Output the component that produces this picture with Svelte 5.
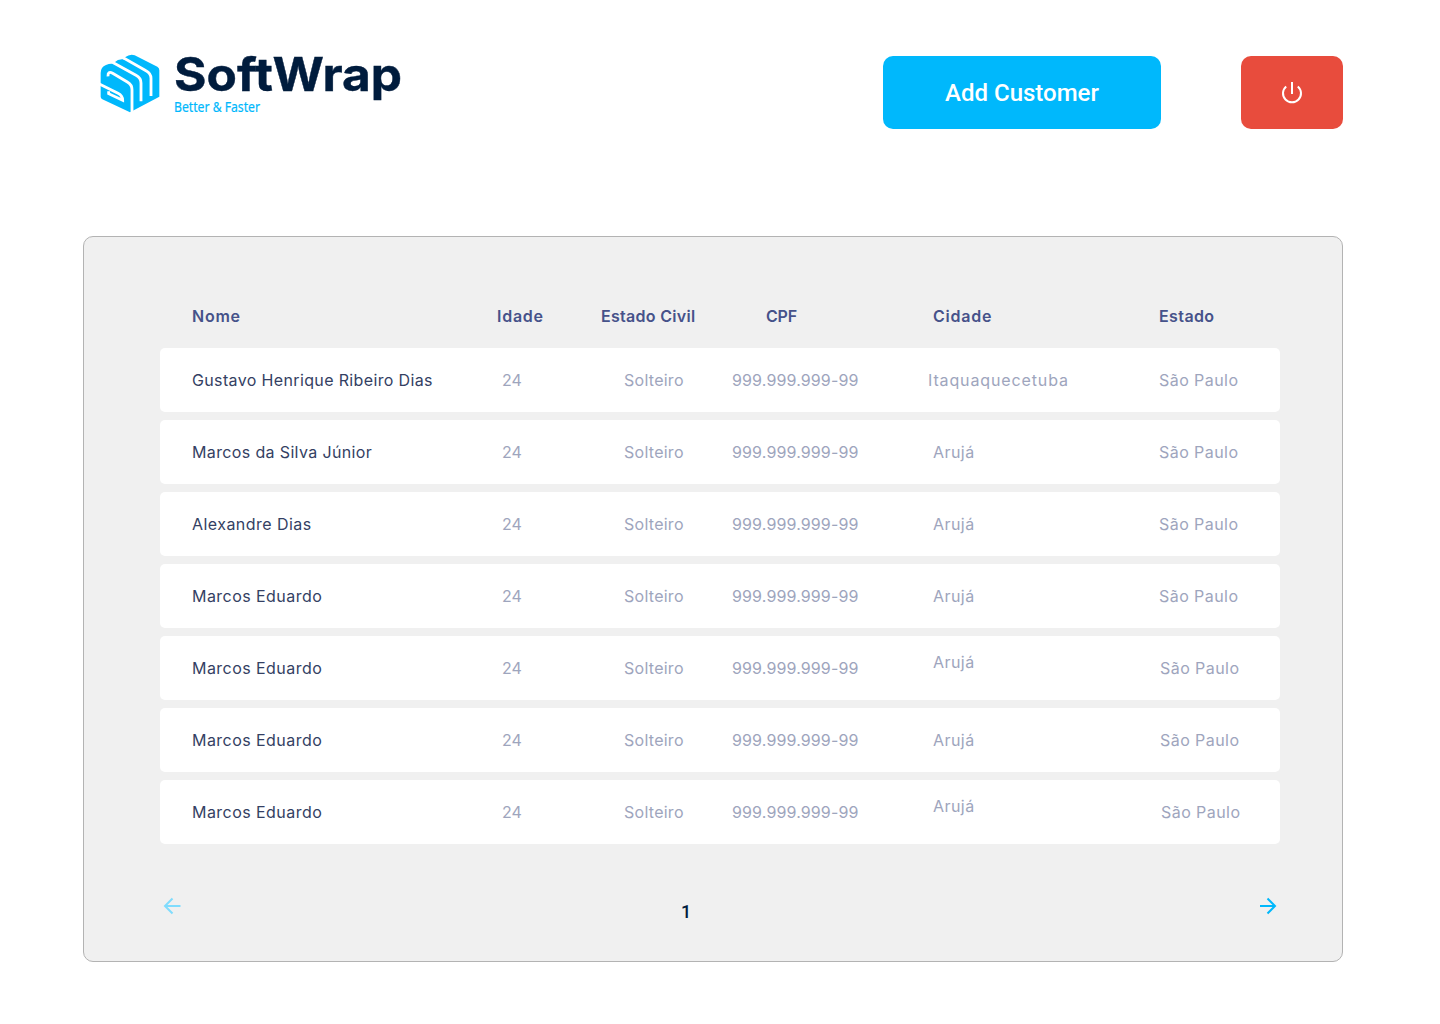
<script>
  const headings = [
    { text: 'Nome', col: 'name' },
    { text: 'Idade', col: 'age' },
    { text: 'Estado Civil', col: 'civil' },
    { text: 'CPF', col: 'cpf' },
    { text: 'Cidade', col: 'city' },
    { text: 'Estado', col: 'state' }
  ];

  const customers = [
    { name: 'Gustavo Henrique Ribeiro Dias', city: 'Itaquaquecetuba', long: true },
    { name: 'Marcos da Silva Júnior', city: 'Arujá', long: true },
    { name: 'Alexandre Dias', city: 'Arujá' },
    { name: 'Marcos Eduardo', city: 'Arujá' },
    { name: 'Marcos Eduardo', city: 'Arujá', raised: true, shift: 1 },
    { name: 'Marcos Eduardo', city: 'Arujá', shift: 1 },
    { name: 'Marcos Eduardo', city: 'Arujá', raised: true, shift: 2 }
  ];
</script>

<main>
  <header>
    <svg class="logo" width="320" height="75" viewBox="0 0 320 75" role="img" aria-label="SoftWrap">
      <g transform="scale(.33333)">
        <path fill="#00b8fc" d="M32 84Q32 66 48 60Q62 54 74 58V52Q84 42 98 43L105 44V37Q120 26 134 31L202 65Q208 69 208 76V155L120 202L37 163Q32 160 32 155Z" />
        <g fill="none" stroke="#fff" stroke-width="8.5">
          <path d="M70 53L138 91Q153 99 153 114V169" />
          <path d="M101 39L168 77Q183 85 183 100V153" />
          <path d="M54 94Q53 77 68 85L112 111Q126 119 126 134V204" />
          <path d="M28 117L84 145Q98 152 98 166L56 146V139" />
        </g>
      </g>
      <text class="word" x="84" y="46.3" textLength="228" lengthAdjust="spacingAndGlyphs">SoftWrap</text>
      <text class="tag" x="84" y="67" textLength="86" lengthAdjust="spacingAndGlyphs">Better &amp; Faster</text>
    </svg>
    <div class="actions">
      <button class="add">Add Customer</button>
      <button class="power" aria-label="Log out">
        <svg width="24" height="24" viewBox="0 0 24 24" fill="none" stroke="#fff" stroke-width="2">
          <path d="M12 1V13M6.2 5.4A9 9 0 1 0 17.8 5.4" />
        </svg>
      </button>
    </div>
  </header>

  <section class="panel">
    <div class="grid head">
      {#each headings as h}
        <div class="h-{h.col}">{h.text}</div>
      {/each}
    </div>
    <div class="rows">
      {#each customers as c}
        <div class="grid row">
          <div class="name" class:long={c.long}>{c.name}</div>
          <div class="age">24</div>
          <div class="civil">Solteiro</div>
          <div class="cpf">999.999.999-99</div>
          <div class="city" class:wide={c.city.length > 10} class:raised={c.raised}>{c.city}</div>
          <div class="state" class:shift1={c.shift === 1} class:shift2={c.shift === 2}>São Paulo</div>
        </div>
      {/each}
    </div>
    <nav class="pager">
      <svg width="24" height="24" viewBox="0 0 24 24" fill="none" stroke="#80dcfd" stroke-width="2">
        <path d="M20.5 12H5M12.5 4.5L5 12L12.5 19.5" />
      </svg>
      <span class="page">1</span>
      <svg width="24" height="24" viewBox="0 0 24 24" fill="none" stroke="#00b8fc" stroke-width="2">
        <path d="M4 12H19.5M11.5 4.5L19 12L11.5 19.5" />
      </svg>
    </nav>
  </section>
</main>

<style>
  :global(body) { margin: 0; background: #fff; }
  main { box-sizing: border-box; width: 1440px; height: 1024px; padding: 45px 97px 0 83px; font-family: Inter, 'Liberation Sans', sans-serif; }
  header { display: flex; justify-content: space-between; height: 191px; padding-left: 7px; }
  .actions { display: flex; gap: 80px; padding-top: 11px; }
  .word { font: 700 46.5px Inter, sans-serif; fill: #001c3d; stroke: #001c3d; stroke-width: .4; }
  .tag { font: 400 13.5px 'Noto Sans', 'Open Sans', sans-serif; fill: #00b8fc; stroke: #00b8fc; stroke-width: .2; }
  button { display: flex; align-items: center; justify-content: center; height: 73px; padding: 0; border: 0; border-radius: 10px; color: #fff; }
  .add { width: 278px; background: #00b8fc; font: 500 24px Roboto, sans-serif; }
  .power { width: 102px; background: #e84c3d; }
  .panel { box-sizing: border-box; width: 1260px; height: 726px; padding: 63px 62px 0 76px; border: 1px solid #b3b3b3; border-radius: 10px; background: #f0f0f0; }
  .grid { display: grid; grid-template-columns: 305px 104px 131px 196px 231px 1fr; align-items: center; padding-left: 32px; font-size: 16px; white-space: nowrap; }
  .head { height: 32px; font-weight: 600; color: #46528a; letter-spacing: .75px; }
  .h-civil { letter-spacing: .3px; }
  .h-cpf { padding-left: 34px; letter-spacing: -.2px; }
  .h-city { padding-left: 5px; }
  .h-state { letter-spacing: .4px; }
  .rows { display: grid; gap: 8px; padding-top: 16px; }
  .row { height: 64px; border-radius: 5px; background: #fff; color: #9ea5bd; }
  .name { color: #343f63; letter-spacing: .45px; }
  .name.long { letter-spacing: .36px; }
  .age { padding-left: 5px; }
  .civil { padding-left: 23px; letter-spacing: .27px; }
  .cpf { letter-spacing: .13px; }
  .city { padding-left: 5px; letter-spacing: .45px; }
  .city.wide { padding-left: 0; letter-spacing: .87px; }
  .state { letter-spacing: .44px; }
  .raised { padding-bottom: 12px; }
  .shift1 { padding-left: 1px; }
  .shift2 { padding-left: 2px; }
  .pager { display: grid; grid-template-columns: 521px 1fr 24px; padding-top: 50px; }
  .page { grid-column: 2; padding-top: 7px; font: 500 18px/21px Roboto, sans-serif; color: #001c3d; }
</style>
